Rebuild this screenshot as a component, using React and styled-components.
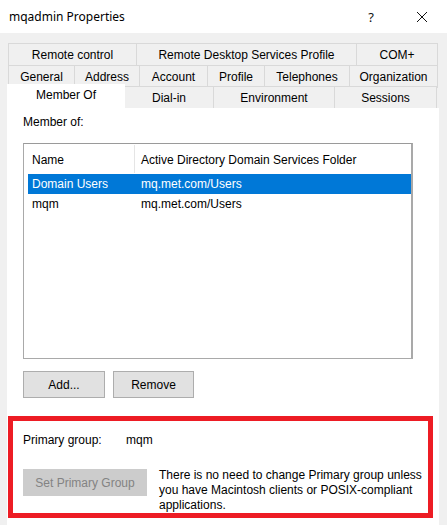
import React from "react";
import styled, { createGlobalStyle } from "styled-components";

const Global = createGlobalStyle`
  html, body { margin: 0; padding: 0; }
  body {
    width: 447px; height: 525px; overflow: hidden;
    background: #f0f0f0;
    font-family: "Liberation Sans", Arial, sans-serif;
    font-size: 12px; color: #000;
  }
`;

const Window = styled.div`
  width: 447px; height: 525px; display: flex; flex-direction: column;
  background: #f0f0f0;
`;

const TitleBar = styled.div`
  height: 33px; background: #fff; display: flex; align-items: center;
  padding-left: 9px; flex-shrink: 0;
`;

const Title = styled.div`
  font-family: "Noto Sans", "Open Sans", sans-serif; font-size: 12px;
  flex: 1;
`;

const HelpBtn = styled.div`
  font-family: "Noto Sans", sans-serif; font-size: 13px; width: 20px;
  text-align: center; margin-right: 35px; color: #111;
`;

const CloseBtn = styled.div`
  width: 12px; height: 12px; margin-right: 19px; display: flex;
`;

const TabArea = styled.div`
  padding-top: 10px; display: flex; flex-direction: column;
`;

const TabRow = styled.div`
  display: flex; margin-left: ${p => p.$ml}px; height: ${p => p.$h}px;
  align-items: flex-end;
`;

const Tab = styled.div`
  box-sizing: border-box;
  width: ${p => p.$w}px; height: 23px;
  border: 1px solid #d9d9d9; margin-left: -1px; margin-bottom: -1px;
  background: #f0f0f0;
  display: flex; align-items: center; justify-content: center;
  padding-top: 1px;
  &:first-child { margin-left: 0; }
`;

const ActiveTab = styled.div`
  box-sizing: border-box; position: relative; z-index: 2;
  width: ${p => p.$w}px; height: 25px; margin-bottom: -1px;
  background: #fff;
  display: flex; align-items: flex-start; justify-content: center;
  padding-top: 4px;
`;

const Panel = styled.div`
  margin-left: 7px; width: 432px; flex: 1; background: #fff;
  padding: 7px 0 0 16px; box-sizing: border-box;
  display: flex; flex-direction: column; position: relative; z-index: 1;
`;

const Label = styled.div`
  line-height: 14px; height: 14px;
`;

const ListBox = styled.div`
  margin-top: 14px; width: 390px; height: 216px; box-sizing: border-box;
  border: 1px solid #a9a9a9; border-right-width: 2px; border-top-color: #9a9a9a;
  display: flex; flex-direction: column;
`;

const ListHeader = styled.div`
  height: 30px; display: grid; grid-template-columns: 103px 1fr;
  align-items: center; padding-left: 7px;
`;

const HeaderCell = styled.div`
  height: 27px; display: flex; align-items: center; padding-left: 1px;
  padding-top: 1px;
  & + & { border-left: 1px solid #e5e5e5; padding-left: 6px; }
`;

const Row = styled.div`
  height: 20px; margin: 0 0 0 4px; display: grid;
  grid-template-columns: 109px 1fr; align-items: center;
  background: ${p => (p.$sel ? "#0078d7" : "transparent")};
  color: ${p => (p.$sel ? "#fff" : "#000")};
`;

const Cell = styled.div`
  padding-left: 4px; white-space: nowrap;
`;

const ButtonRow = styled.div`
  display: flex; gap: 8px; margin-top: 12px;
`;

const Button = styled.div`
  box-sizing: border-box; width: ${p => p.$w}px; height: 27px;
  background: ${p => (p.$disabled ? "#cccccc" : "#e1e1e1")};
  border: 1px solid ${p => (p.$disabled ? "#cccccc" : "#adadad")};
  color: ${p => (p.$disabled ? "#838383" : "#000")};
  display: flex; align-items: center; justify-content: center;
`;

const RedBox = styled.div`
  margin-top: 18px; margin-left: -15px; width: 425px; height: 102px;
  box-sizing: border-box; border: 5px solid #ed1c24;
  padding: 12px 0 0 10px; display: flex; flex-direction: column;
`;

const GroupLine = styled.div`
  display: flex; line-height: 15px;
`;

const GroupLabel = styled.div`
  width: 103px;
`;

const SetRow = styled.div`
  display: flex; align-items: flex-start; margin-top: 21px;
`;

const Note = styled.div`
  margin-left: 12px; width: 265px; line-height: 15px; margin-top: -1px;
`;

const row1 = [["Remote control", 129], ["Remote Desktop Services Profile", 221], ["COM+", 82]];
const row2 = [["General", 67], ["Address", 66], ["Account", 69], ["Profile", 58], ["Telephones", 86], ["Organization", 89]];
const row3 = [["Dial-in", 90], ["Environment", 122], ["Sessions", 103]];

export default function App() {
  return (
    <Window>
      <Global />
      <TitleBar>
        <Title>mqadmin Properties</Title>
        <HelpBtn>?</HelpBtn>
        <CloseBtn>
          <svg width="12" height="12" viewBox="0 0 12 12">
            <path d="M1 1 L11 11 M11 1 L1 11" stroke="#111" strokeWidth="1" fill="none" />
          </svg>
        </CloseBtn>
      </TitleBar>
      <TabArea>
        <TabRow $ml={8} $h={22}>
          {row1.map(([t, w]) => <Tab key={t} $w={w}>{t}</Tab>)}
        </TabRow>
        <TabRow $ml={8} $h={22}>
          {row2.map(([t, w]) => <Tab key={t} $w={w}>{t}</Tab>)}
        </TabRow>
        <TabRow $ml={7} $h={21}>
          <ActiveTab $w={118}>Member Of</ActiveTab>
          {row3.map(([t, w]) => <Tab key={t} $w={w}>{t}</Tab>)}
        </TabRow>
      </TabArea>
      <Panel>
        <Label>Member of:</Label>
        <ListBox>
          <ListHeader>
            <HeaderCell>Name</HeaderCell>
            <HeaderCell>Active Directory Domain Services Folder</HeaderCell>
          </ListHeader>
          <Row $sel>
            <Cell>Domain Users</Cell>
            <Cell>mq.met.com/Users</Cell>
          </Row>
          <Row>
            <Cell>mqm</Cell>
            <Cell>mq.met.com/Users</Cell>
          </Row>
        </ListBox>
        <ButtonRow>
          <Button $w={82}>Add...</Button>
          <Button $w={81}>Remove</Button>
        </ButtonRow>
        <RedBox>
          <GroupLine>
            <GroupLabel>Primary group:</GroupLabel>
            <div>mqm</div>
          </GroupLine>
          <SetRow>
            <Button $w={124} $disabled>Set Primary Group</Button>
            <Note>
              There is no need to change Primary group unless you have Macintosh clients or POSIX-compliant applications.
            </Note>
          </SetRow>
        </RedBox>
      </Panel>
    </Window>
  );
}
